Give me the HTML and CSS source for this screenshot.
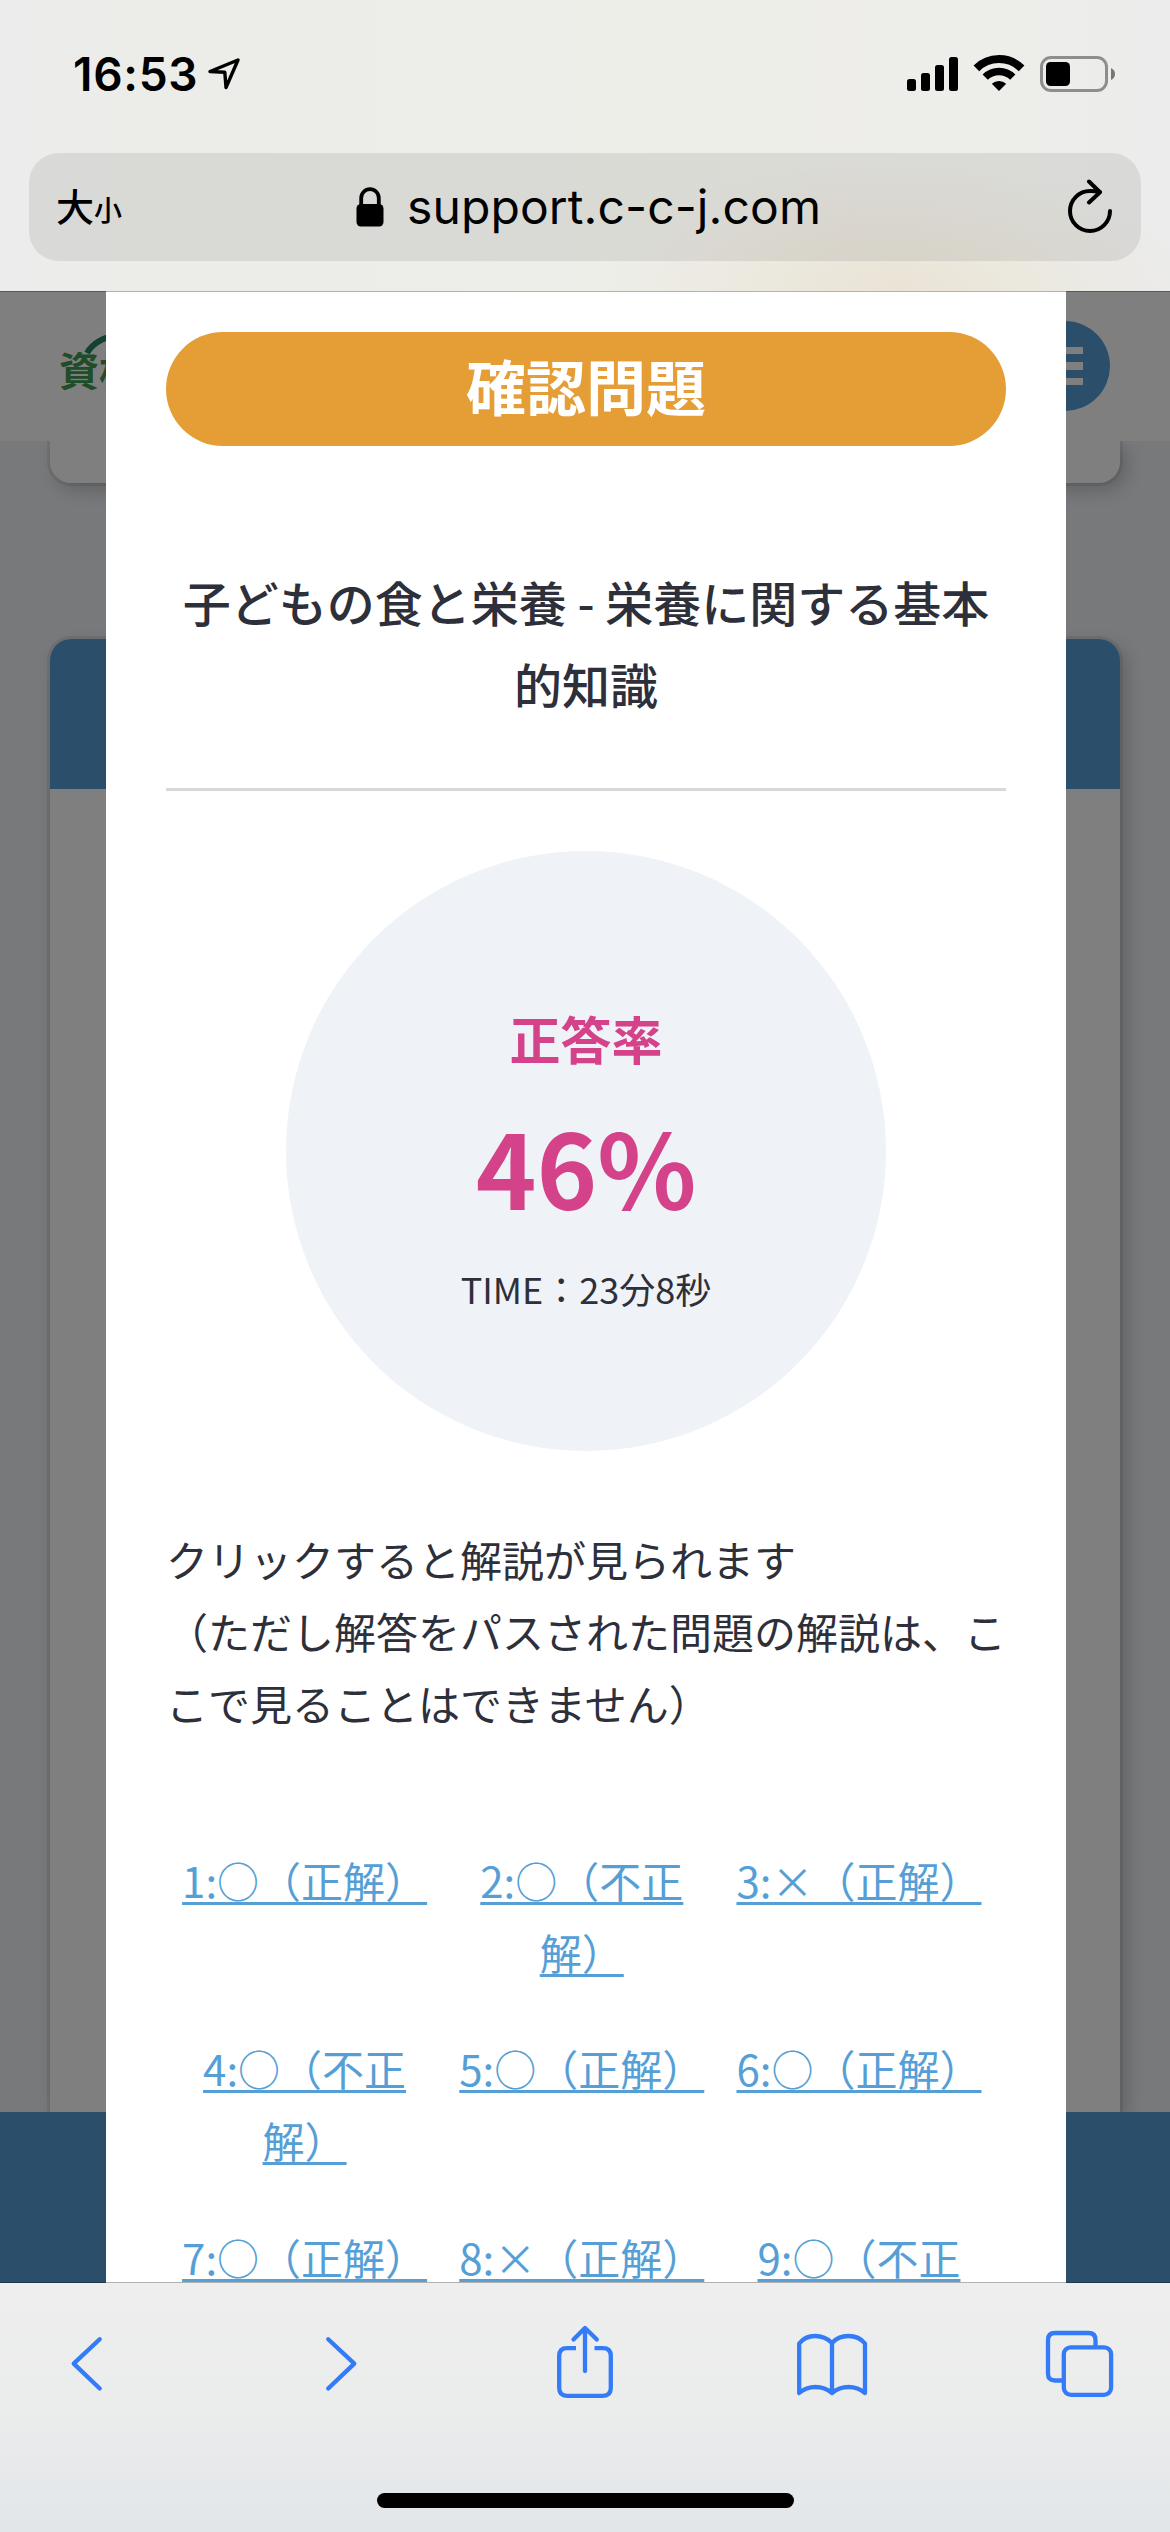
FILE: index.html
```html
<!DOCTYPE html>
<html lang="ja">
<head>
<meta charset="utf-8">
<title>確認問題</title>
<link rel="stylesheet" href="styles.css">
</head>
<body>
<header class="chrome-top">
  <div class="status">
    <span class="clock">16:53</span>
    <svg class="location" width="34" height="34" viewBox="0 0 34 34"><path d="M3 15.500 31 4 19 31.500 17.800 16.200Z" fill="none" stroke="#000" stroke-width="3.400" stroke-linejoin="round"/></svg>
    <svg class="indicators" width="210" height="40" viewBox="906 54 210 40">
      <rect x="907" y="79" width="9" height="12" rx="2.500"/><rect x="921" y="73" width="9" height="18" rx="2.500"/><rect x="935" y="65" width="9" height="26" rx="2.500"/><rect x="949" y="57" width="9" height="34" rx="2.500"/>
      <path d="M976.400 68.400A32 32 0 0 1 1021.600 68.400" fill="none" stroke="#000" stroke-width="8"/>
      <path d="M985.200 77.200A19.500 19.500 0 0 1 1012.800 77.200" fill="none" stroke="#000" stroke-width="7.400"/>
      <path d="M999 91 991.800 83.800A10.500 10.500 0 0 1 1006.200 83.800Z"/>
      <rect x="1041.500" y="57.500" width="65" height="33" rx="9.500" fill="none" stroke="#000" stroke-opacity=".4" stroke-width="3"/>
      <rect x="1046" y="62" width="24" height="24" rx="4.500"/>
      <path d="M1111 68Q1115 70 1115 74T1111 80Z" fill-opacity=".5"/>
    </svg>
  </div>
  <div class="address">
    <div class="text-size"><span>大</span><small>小</small></div>
    <div class="host">
      <svg width="28" height="40" viewBox="0 0 28 40"><rect x=".5" y="17" width="27" height="22.500" rx="4.500"/><path d="M5.200 19V11a8.800 8.800 0 0 1 17.600 0v8" fill="none" stroke="#000" stroke-width="3.800"/></svg>
      <span>support.c-c-j.com</span>
    </div>
    <svg class="reload" width="46" height="56" viewBox="1067 180 46 56"><path d="M1110 212A20 20 0 1 1 1090 192Q1095 192 1100 193M1089 182.500 1100 193.200 1089 203.500" fill="none" stroke="#000" stroke-width="4" stroke-linecap="round" stroke-linejoin="round"/></svg>
  </div>
</header>

<main class="viewport">
  <div class="page">
    <div class="site-header">
      <div class="logo"><svg class="logo-arc" width="44" height="36" viewBox="0 0 44 36"><path d="M3 21Q13 4 42 2" fill="none" stroke="#28806c" stroke-width="6"/></svg>資格</div>
      <div class="menu"><i></i><i></i><i></i></div>
    </div>
    <div class="card card-end"></div>
    <div class="card card-main"><div class="card-head"></div></div>
    <div class="site-footer"></div>
  </div>
  <div class="overlay">
    <section class="modal">
      <h1 class="pill">確認問題</h1>
      <h2 class="title">子どもの食と栄養 - 栄養に関する基本的知識</h2>
      <hr class="rule">
      <div class="score">
        <div class="score-label">正答率</div>
        <div class="score-value">46%</div>
        <div class="score-time">TIME：23分8秒</div>
      </div>
      <p class="note">クリックすると解説が見られます<br>（ただし解答をパスされた問題の解説は、ここで見ることはできません）</p>
      <ul class="answers">
        <li><a href="#">1:○（正解）</a></li>
        <li><a href="#">2:○（不正解）</a></li>
        <li><a href="#">3:×（正解）</a></li>
        <li><a href="#">4:○（不正解）</a></li>
        <li><a href="#">5:○（正解）</a></li>
        <li><a href="#">6:○（正解）</a></li>
        <li><a href="#">7:○（正解）</a></li>
        <li><a href="#">8:×（正解）</a></li>
        <li><a href="#">9:○（不正</a></li>
      </ul>
    </section>
  </div>
</main>

<footer class="chrome-bottom">
  <nav class="tools">
    <svg width="34" height="80" viewBox="70 2323 34 80"><path d="M99.700 2339.200 73.700 2363.600 99.700 2388.500"/></svg>
    <svg width="34" height="80" viewBox="325 2323 34 80"><path d="M328.200 2339.200 354.300 2363.600 328.200 2388.500"/></svg>
    <svg width="60" height="80" viewBox="555 2323 60 80"><path class="butt" d="M576 2348.200H567Q559.200 2348.200 559.200 2356V2388Q559.200 2395.800 567 2395.800H603Q610.800 2395.800 610.800 2388V2356Q610.800 2348.200 603 2348.200H594.500"/><path d="M585 2371V2329M573.500 2339.500 585 2328 596.800 2339.500"/></svg>
    <svg width="74" height="80" viewBox="795 2323 74 80"><path d="M799.200 2393V2343.500Q805 2336 815 2336T832 2343Q838 2336 848.500 2336T865 2343.500V2393Q858 2387 848.500 2387T832 2393Q825 2387 815.500 2387T799.200 2393ZM832 2343V2393"/></svg>
    <svg width="72" height="80" viewBox="1044 2323 72 80"><path class="butt" d="M1062 2380.500H1055Q1048 2380.500 1048 2373.500V2340Q1048 2333 1055 2333H1088.500Q1095.500 2333 1095.500 2340V2346"/><rect x="1063.800" y="2347.300" width="47.300" height="47.500" rx="7"/></svg>
  </nav>
  <div class="home"></div>
</footer>
</body>
</html>
```
FILE: styles.css
```css
* { box-sizing: border-box; }
body {
  margin: 0;
  width: 1170px;
  height: 2532px;
  display: flex;
  flex-direction: column;
  overflow: hidden;
  font-family: "Noto Sans CJK JP", sans-serif;
  color: #2d2f3a;
  text-spacing-trim: space-all;
}
svg { display: block; flex: none; }

/* browser top bar */
.chrome-top {
  height: 291px;
  flex: none;
  background:
    radial-gradient(ellipse 300px 130px at 900px 291px, rgba(226, 208, 172, .32), rgba(226, 208, 172, 0)),
    linear-gradient(90deg, #ececed 0, #ecede8 170px, #edeee8 600px, #eeede9 850px, #edeeea 1030px, #ececec 1140px);
  font-family: Inter, "Noto Sans CJK JP", sans-serif;
  color: #000;
}
.status {
  height: 153px;
  display: flex;
  align-items: flex-start;
  padding: 54px 54px 0 73px;
}
.clock {
  width: 125px;
  font-size: 46px;
  letter-spacing: .7px;
  line-height: 41px;
  font-weight: 600;
  white-space: nowrap;
}
.location { margin-left: 9px; margin-top: 2px; }
.indicators { margin-left: auto; }
.address {
  height: 108px;
  margin: 0 29px;
  padding: 0 28px 0 27px;
  border-radius: 30px;
  background: rgba(60, 60, 60, .11);
  display: flex;
  align-items: center;
  justify-content: space-between;
}
.text-size {
  width: 110px;
  display: flex;
  align-items: baseline;
  font-family: "Noto Sans CJK JP", sans-serif;
  font-weight: 500;
  font-size: 38px;
  line-height: 50px;
}
.text-size small { font-size: 28px; }
.host { display: flex; align-items: center; gap: 23px; margin: 0 auto 0 190px; font-size: 48px; }
.host span { letter-spacing: .1px; line-height: 60px; }

/* web content */
.viewport {
  position: relative;
  height: 1992px;
  flex: none;
  overflow: hidden;
}
.viewport::after {
  content: "";
  position: absolute;
  inset: 0;
  border: solid rgba(0, 0, 0, .3);
  border-width: 1px 0;
}
.page {
  isolation: isolate;
  height: 100%;
  display: flex;
  flex-direction: column;
  background: #eff2f7;
}
.site-header {
  position: relative;
  z-index: 1;
  height: 150px;
  flex: none;
  padding: 30px 60px 0 59px;
  display: flex;
  justify-content: space-between;
  background: #fff;
}
.logo {
  position: relative;
  padding-top: 18px;
  font-size: 40px;
  line-height: 60px;
  font-weight: 700;
  color: #3c9a50;
}
.logo-arc { position: absolute; left: 25px; top: 11px; }
.menu {
  width: 90px;
  height: 90px;
  border-radius: 50%;
  background: #569fd6;
  display: flex;
  flex-direction: column;
  align-items: center;
  justify-content: center;
  gap: 8px;
}
.menu i { width: 36px; height: 7.500px; background: #fff; }
.card {
  margin: 0 50px;
  background: #fff;
  box-shadow: 0 0 0 3px rgba(0, 0, 0, .07), 6px 7px 18px rgba(0, 0, 0, .2);
}
.card-end { height: 42px; flex: none; border-radius: 0 0 21px 21px; }
.card-main { flex: 1; margin-top: 156px; border-radius: 21px 21px 0 0; }
.card-head { height: 150px; border-radius: 21px 21px 0 0; background: #569fd6; }
.site-footer { position: relative; height: 171px; flex: none; background: #569fd6; }

/* result dialog */
.overlay {
  position: absolute;
  inset: 0;
  display: flex;
  background: rgba(0, 0, 0, .5);
}
.modal {
  width: 960px;
  margin-left: 106px;
  padding: 41px 60px 0;
  background: #fff;
}
.pill {
  height: 114px;
  margin: 0;
  border-radius: 57px;
  background: #e59d36;
  color: #fff;
  font-size: 60px;
  line-height: 105px;
  font-weight: 700;
  text-align: center;
}
.title {
  margin: 115px 0 64px;
  font-size: 48px;
  line-height: 81.600px;
  font-weight: 500;
  text-align: center;
}
.rule { height: 3px; margin: 0; border: 0; background: #d8d8d8; }
.score {
  width: 600px;
  height: 600px;
  margin: 60px auto 0;
  padding-top: 144px;
  border-radius: 50%;
  background: #eff2f7;
  text-align: center;
}
.score-label { font-size: 51px; line-height: 87px; font-weight: 700; color: #d44289; }
.score-value { font-size: 103px; line-height: 168px; font-weight: 700; color: #d44289; }
.score-time { font-size: 36px; line-height: 77px; }
.note { margin: 72px 0 105px; font-size: 42px; line-height: 71.800px; }
.answers {
  margin: 0;
  padding: 0;
  list-style: none;
  display: grid;
  grid-template-columns: repeat(3, 277.200px);
  grid-auto-rows: 188.800px;
  font-size: 42px;
  line-height: 72px;
  text-align: center;
}
.answers a {
  color: #569fd6;
  text-decoration-thickness: 3px;
  text-underline-offset: 4px;
}

/* browser bottom bar */
.chrome-bottom {
  height: 249px;
  flex: none;
  display: flex;
  flex-direction: column;
  align-items: center;
  justify-content: space-between;
  padding: 40px 0 24px;
  background: linear-gradient(#eee, #ebecec 50%, #e2e6e9);
}
.tools {
  width: 100%;
  padding: 0 54px 0 70px;
  display: grid;
  grid-template-columns: 255px 230px 240px 249px 72px;
}
.tools svg { fill: none; stroke: #347bf7; stroke-width: 4.300; stroke-linecap: round; stroke-linejoin: round; }
.tools .butt { stroke-linecap: butt; }
.home { width: 417px; height: 15px; border-radius: 8px; background: #000; }
```
